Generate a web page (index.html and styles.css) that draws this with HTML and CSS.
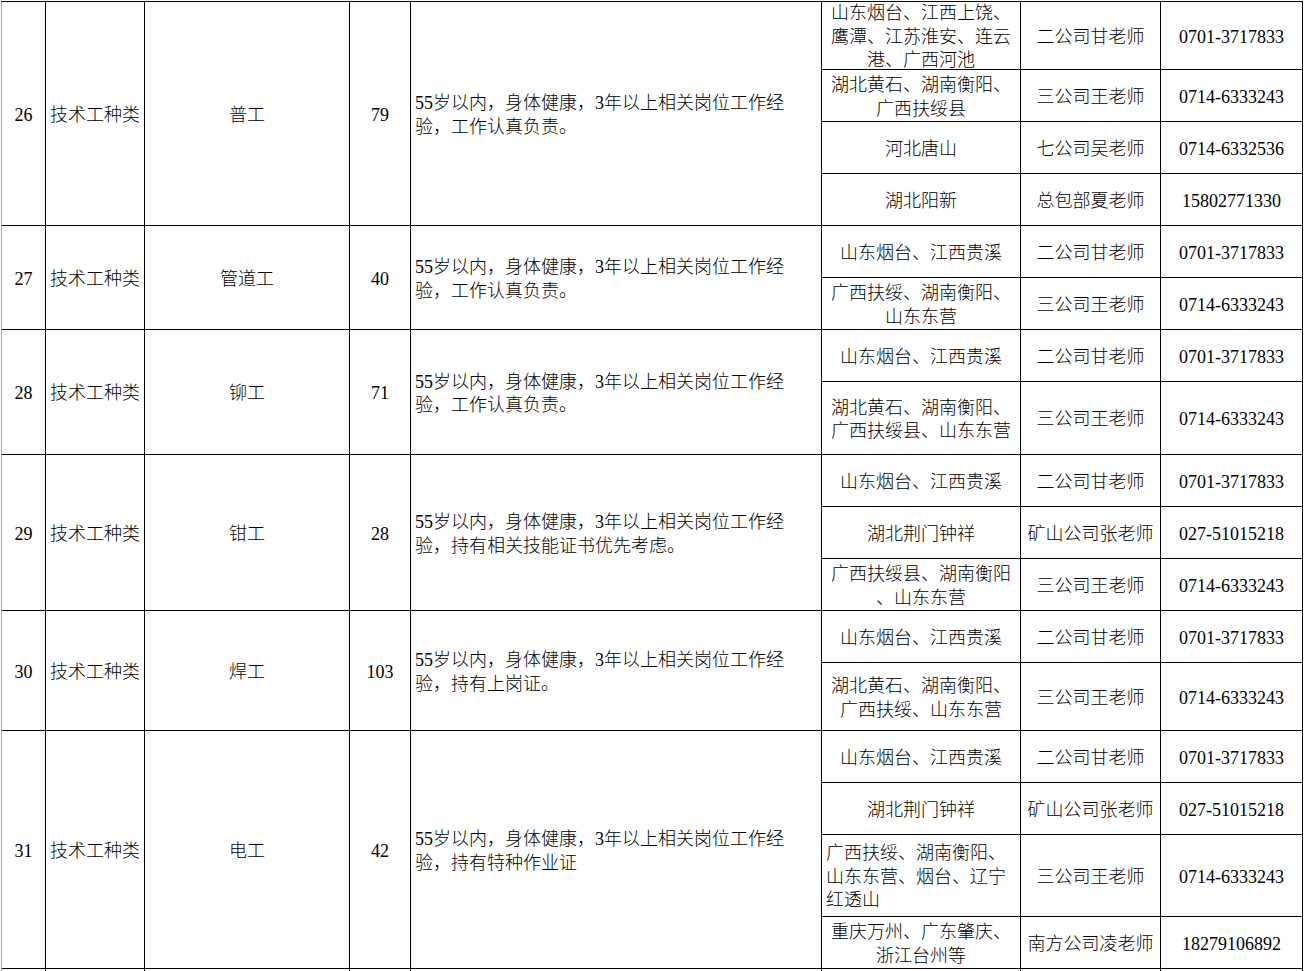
FILE: index.html
```html
<!DOCTYPE html>
<html lang="zh-CN">
<head>
<meta charset="utf-8">
<title>岗位表</title>
<link rel="stylesheet" href="styles.css">
</head>
<body>
<div class="sheet">

  <div class="group">
    <div class="c c-no">26</div>
    <div class="c c-type">技术工种类</div>
    <div class="c c-job">普工</div>
    <div class="c c-num">79</div>
    <div class="c c-desc">55岁以内，身体健康，3年以上相关岗位工作经<br>验，工作认真负责。</div>
    <div class="subs">
      <div class="sub h68">
        <div class="c c-area">山东烟台、江西上饶、<br>鹰潭、江苏淮安、连云<br>港、广西河池</div>
        <div class="c c-who">二公司甘老师</div>
        <div class="c c-tel">0701-3717833</div>
      </div>
      <div class="sub h52">
        <div class="c c-area">湖北黄石、湖南衡阳、<br>广西扶绥县</div>
        <div class="c c-who">三公司王老师</div>
        <div class="c c-tel">0714-6333243</div>
      </div>
      <div class="sub h52">
        <div class="c c-area">河北唐山</div>
        <div class="c c-who">七公司吴老师</div>
        <div class="c c-tel">0714-6332536</div>
      </div>
      <div class="sub h52">
        <div class="c c-area">湖北阳新</div>
        <div class="c c-who">总包部夏老师</div>
        <div class="c c-tel">15802771330</div>
      </div>
    </div>
  </div>

  <div class="group">
    <div class="c c-no">27</div>
    <div class="c c-type">技术工种类</div>
    <div class="c c-job">管道工</div>
    <div class="c c-num">40</div>
    <div class="c c-desc">55岁以内，身体健康，3年以上相关岗位工作经<br>验，工作认真负责。</div>
    <div class="subs">
      <div class="sub h52">
        <div class="c c-area">山东烟台、江西贵溪</div>
        <div class="c c-who">二公司甘老师</div>
        <div class="c c-tel">0701-3717833</div>
      </div>
      <div class="sub h52">
        <div class="c c-area">广西扶绥、湖南衡阳、<br>山东东营</div>
        <div class="c c-who">三公司王老师</div>
        <div class="c c-tel">0714-6333243</div>
      </div>
    </div>
  </div>

  <div class="group">
    <div class="c c-no">28</div>
    <div class="c c-type">技术工种类</div>
    <div class="c c-job">铆工</div>
    <div class="c c-num">71</div>
    <div class="c c-desc">55岁以内，身体健康，3年以上相关岗位工作经<br>验，工作认真负责。</div>
    <div class="subs">
      <div class="sub h52">
        <div class="c c-area">山东烟台、江西贵溪</div>
        <div class="c c-who">二公司甘老师</div>
        <div class="c c-tel">0701-3717833</div>
      </div>
      <div class="sub h73">
        <div class="c c-area">湖北黄石、湖南衡阳、<br>广西扶绥县、山东东营</div>
        <div class="c c-who">三公司王老师</div>
        <div class="c c-tel">0714-6333243</div>
      </div>
    </div>
  </div>

  <div class="group">
    <div class="c c-no">29</div>
    <div class="c c-type">技术工种类</div>
    <div class="c c-job">钳工</div>
    <div class="c c-num">28</div>
    <div class="c c-desc">55岁以内，身体健康，3年以上相关岗位工作经<br>验，持有相关技能证书优先考虑。</div>
    <div class="subs">
      <div class="sub h52">
        <div class="c c-area">山东烟台、江西贵溪</div>
        <div class="c c-who">二公司甘老师</div>
        <div class="c c-tel">0701-3717833</div>
      </div>
      <div class="sub h52">
        <div class="c c-area">湖北荆门钟祥</div>
        <div class="c c-who">矿山公司张老师</div>
        <div class="c c-tel">027-51015218</div>
      </div>
      <div class="sub h52">
        <div class="c c-area">广西扶绥县、湖南衡阳<br>、山东东营</div>
        <div class="c c-who">三公司王老师</div>
        <div class="c c-tel">0714-6333243</div>
      </div>
    </div>
  </div>

  <div class="group">
    <div class="c c-no">30</div>
    <div class="c c-type">技术工种类</div>
    <div class="c c-job">焊工</div>
    <div class="c c-num">103</div>
    <div class="c c-desc">55岁以内，身体健康，3年以上相关岗位工作经<br>验，持有上岗证。</div>
    <div class="subs">
      <div class="sub h52">
        <div class="c c-area">山东烟台、江西贵溪</div>
        <div class="c c-who">二公司甘老师</div>
        <div class="c c-tel">0701-3717833</div>
      </div>
      <div class="sub h68">
        <div class="c c-area">湖北黄石、湖南衡阳、<br>广西扶绥、山东东营</div>
        <div class="c c-who">三公司王老师</div>
        <div class="c c-tel">0714-6333243</div>
      </div>
    </div>
  </div>

  <div class="group">
    <div class="c c-no">31</div>
    <div class="c c-type">技术工种类</div>
    <div class="c c-job">电工</div>
    <div class="c c-num">42</div>
    <div class="c c-desc">55岁以内，身体健康，3年以上相关岗位工作经<br>验，持有特种作业证</div>
    <div class="subs">
      <div class="sub h52">
        <div class="c c-area">山东烟台、江西贵溪</div>
        <div class="c c-who">二公司甘老师</div>
        <div class="c c-tel">0701-3717833</div>
      </div>
      <div class="sub h52">
        <div class="c c-area">湖北荆门钟祥</div>
        <div class="c c-who">矿山公司张老师</div>
        <div class="c c-tel">027-51015218</div>
      </div>
      <div class="sub h82">
        <div class="c c-area left">广西扶绥、湖南衡阳、<br>山东东营、烟台、辽宁<br>红透山</div>
        <div class="c c-who">三公司王老师</div>
        <div class="c c-tel">0714-6333243</div>
      </div>
      <div class="sub h52">
        <div class="c c-area">重庆万州、广东肇庆、<br>浙江台州等</div>
        <div class="c c-who">南方公司凌老师</div>
        <div class="c c-tel">18279106892</div>
      </div>
    </div>
  </div>

  <div class="group tail">
    <div class="c c-no"></div>
    <div class="c c-type"></div>
    <div class="c c-job"></div>
    <div class="c c-num"></div>
    <div class="c c-desc"></div>
    <div class="c c-area"></div>
    <div class="c c-who"></div>
    <div class="c c-tel"></div>
  </div>

</div>
</body>
</html>
```

FILE: styles.css
```css
html, body {
  margin: 0;
  padding: 0;
  overflow: hidden;
  background: #fff;
}

body {
  font-family: "Liberation Serif", "Noto Sans CJK SC", serif;
  font-size: 18px;
  line-height: 23.5px;
  color: #000;
  font-weight: 300;
}

.sheet {
  margin: 1px 0 0 1px;
  width: 1302px;
  box-sizing: border-box;
  border-top: 1px solid #000;
  border-left: 1px solid #a8a8a8;
}

.group {
  display: flex;
}

.subs {
  display: flex;
  flex-direction: column;
}

.sub {
  display: flex;
}

.h52 { height: 52px; }
.h68 { height: 68px; }
.h73 { height: 73px; }
.h82 { height: 82px; }

.c {
  box-sizing: border-box;
  border-right: 1px solid #000;
  border-bottom: 1px solid #000;
  padding-top: 4px;
  display: flex;
  align-items: center;
  justify-content: center;
  text-align: center;
  white-space: nowrap;
  overflow: hidden;
}

.c-no   { width: 44px; }
.c-type { width: 99px; }
.c-job  { width: 205px; }
.c-num  { width: 61px; }
.c-desc {
  width: 411px;
  justify-content: flex-start;
  text-align: left;
  padding-left: 4px;
}
.c-area { width: 199px; }
.c-area.left {
  justify-content: flex-start;
  text-align: left;
  padding-left: 4px;
}
.c-who  { width: 140px; }
.c-tel  { width: 142px; }

.tail .c {
  height: 12px;
  padding-top: 0;
  border-bottom: none;
}
```
